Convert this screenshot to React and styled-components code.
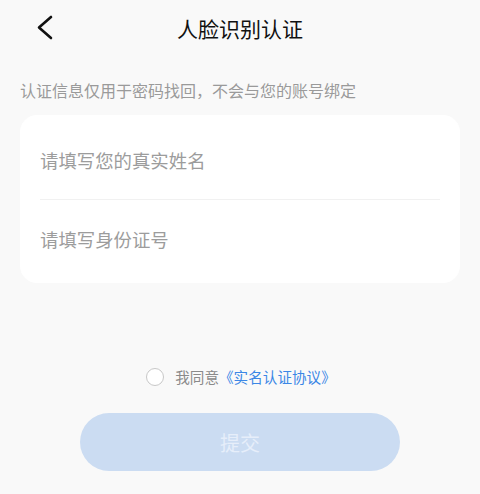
import React from "react";
import styled, { createGlobalStyle } from "styled-components";

const Global = createGlobalStyle`
  html, body { margin: 0; padding: 0; background: #f9f9f9; }
  body { font-family: "Noto Sans CJK SC", "Noto Sans", sans-serif; }
`;

const Page = styled.div`
  width: 480px;
  height: 494px;
  background: #f9f9f9;
  display: flex;
  flex-direction: column;
  overflow: hidden;
`;

const NavBar = styled.div`
  height: 56px;
  display: grid;
  grid-template-columns: 80px 1fr 80px;
  align-items: center;
`;

const BackButton = styled.button`
  border: 0;
  background: none;
  padding: 0 0 0 36px;
  height: 56px;
  display: flex;
  align-items: center;
  cursor: pointer;
`;

const Title = styled.h1`
  margin: 0;
  text-align: center;
  font-size: 21px;
  font-weight: 400;
  color: #111;
  line-height: 56px;
`;

const Hint = styled.p`
  margin: 22px 0 0 20px;
  font-size: 16px;
  color: #9a9a9a;
  line-height: 24px;
`;

const Card = styled.div`
  margin: 13px 20px 0;
  background: #fff;
  border-radius: 17px;
  padding: 0 20px;
  display: flex;
  flex-direction: column;
`;

const Field = styled.input`
  height: ${(p) => p.$h}px;
  box-sizing: border-box;
  border: 0;
  outline: none;
  background: transparent;
  padding: ${(p) => p.$top || 0}px 0 ${(p) => p.$bottom || 0}px;
  font-family: "Noto Sans CJK SC", sans-serif;
  font-size: 18.4px;
  color: #333;
  border-bottom: ${(p) => (p.$divider ? "1px solid #f1f1f1" : "0")};
  &::placeholder { color: #9c9c9c; }
`;

const Agree = styled.label`
  margin-top: 83px;
  display: flex;
  align-items: center;
  justify-content: center;
  gap: 11px;
  padding-left: 2px;
  font-size: 14.6px;
  color: #8a8a8a;
`;

const Circle = styled.span`
  width: 16px;
  height: 16px;
  border: 1.5px solid #c8c8c8;
  border-radius: 50%;
  background: #fff;
`;

const Link = styled.span`
  color: #3b87e6;
`;

const Submit = styled.button`
  margin: 26px auto 0;
  width: 320px;
  height: 58px;
  border: 0;
  border-radius: 29px;
  background: #cbdcf2;
  color: #e6eefa;
  font-family: "Noto Sans CJK SC", sans-serif;
  font-size: 20px;
`;

export default function App() {
  return (
    <Page>
      <Global />
      <NavBar>
        <BackButton aria-label="back">
          <svg width="18" height="26" viewBox="0 0 18 26">
            <path d="M15 2 L3 12.5 L15 23" fill="none" stroke="#111" strokeWidth="2.6" strokeLinecap="round" strokeLinejoin="round" />
          </svg>
        </BackButton>
        <Title>人脸识别认证</Title>
        <div />
      </NavBar>
      <Hint>认证信息仅用于密码找回，不会与您的账号绑定</Hint>
      <Card>
        <Field $h={85} $top={6} $divider placeholder="请填写您的真实姓名" />
        <Field $h={83} $bottom={6} placeholder="请填写身份证号" />
      </Card>
      <Agree>
        <Circle />
        <span>
          我同意<Link>《实名认证协议》</Link>
        </span>
      </Agree>
      <Submit>提交</Submit>
    </Page>
  );
}
